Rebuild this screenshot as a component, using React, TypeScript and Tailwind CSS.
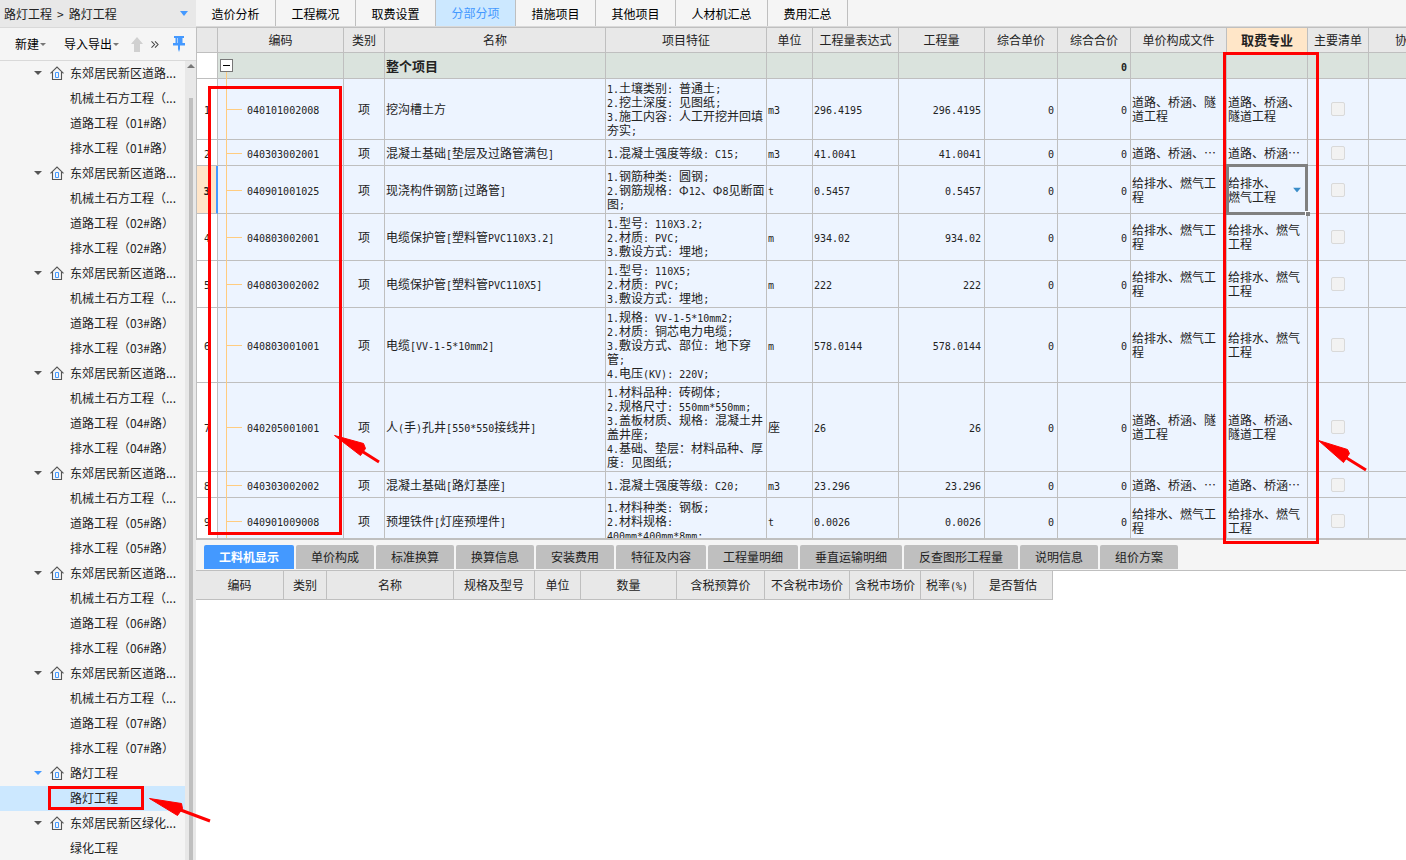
import { useState } from "react";

const mainTabs = [
  "造价分析",
  "工程概况",
  "取费设置",
  "分部分项",
  "措施项目",
  "其他项目",
  "人材机汇总",
  "费用汇总",
];

const detailTabs = [
  { label: "工料机显示", width: "w-[90px]" },
  { label: "单价构成", width: "w-[78px]" },
  { label: "标准换算", width: "w-[78px]" },
  { label: "换算信息", width: "w-[78px]" },
  { label: "安装费用", width: "w-[78px]" },
  { label: "特征及内容", width: "w-[90px]" },
  { label: "工程量明细", width: "w-[90px]" },
  { label: "垂直运输明细", width: "w-[102px]" },
  { label: "反查图形工程量", width: "w-[114px]" },
  { label: "说明信息", width: "w-[78px]" },
  { label: "组价方案", width: "w-[78px]" },
];

const columns = [
  { label: "", width: "w-[21px]" },
  { label: "编码", width: "w-[126px]" },
  { label: "类别", width: "w-[41px]" },
  { label: "名称", width: "w-[221px]" },
  { label: "项目特征", width: "w-[161px]" },
  { label: "单位", width: "w-[46px]" },
  { label: "工程量表达式", width: "w-[86px]" },
  { label: "工程量", width: "w-[86px]" },
  { label: "综合单价", width: "w-[73px]" },
  { label: "综合合价", width: "w-[73px]" },
  { label: "单价构成文件", width: "w-[96px]" },
  { label: "取费专业", width: "w-[81px]" },
  { label: "主要清单", width: "w-[61px]" },
];

const detailColumns = [
  { label: "编码", width: "w-[88px]" },
  { label: "类别", width: "w-[43px]" },
  { label: "名称", width: "w-[127px]" },
  { label: "规格及型号", width: "w-[81px]" },
  { label: "单位", width: "w-[46px]" },
  { label: "数量", width: "w-[96px]" },
  { label: "含税预算价", width: "w-[88px]" },
  { label: "不含税市场价", width: "w-[85px]" },
  { label: "含税市场价", width: "w-[71px]" },
  { label: "税率(%)", width: "w-[53px]" },
  { label: "是否暂估", width: "w-[79px]" },
];

const ROAD = "道路、桥涵、隧\n道工程";
const ROAD_FEE = "道路、桥涵、\n隧道工程";
const WATER = "给排水、燃气工\n程";
const WATER_FEE = "给排水、燃气\n工程";

interface Item {
  code: string;
  name: string;
  feature: string;
  unit: string;
  qty: string;
  file: string;
  fee: string;
  height: string;
}

const items: Item[] = [
  {
    code: "040101002008",
    name: "挖沟槽土方",
    feature: "1.土壤类别: 普通土;\n2.挖土深度: 见图纸;\n3.施工内容: 人工开挖并回填\n夯实;",
    unit: "m3",
    qty: "296.4195",
    file: ROAD,
    fee: ROAD_FEE,
    height: "h-[61px]",
  },
  {
    code: "040303002001",
    name: "混凝土基础[垫层及过路管满包]",
    feature: "1.混凝土强度等级: C15;",
    unit: "m3",
    qty: "41.0041",
    file: "道路、桥涵、…",
    fee: "道路、桥涵…",
    height: "h-[26px]",
  },
  {
    code: "040901001025",
    name: "现浇构件钢筋[过路管]",
    feature: "1.钢筋种类: 圆钢;\n2.钢筋规格: Φ12、Φ8见断面\n图;",
    unit: "t",
    qty: "0.5457",
    file: WATER,
    fee: "给排水、\n燃气工程",
    height: "h-[48px]",
  },
  {
    code: "040803002001",
    name: "电缆保护管[塑料管PVC110X3.2]",
    feature: "1.型号: 110X3.2;\n2.材质: PVC;\n3.敷设方式: 埋地;",
    unit: "m",
    qty: "934.02",
    file: WATER,
    fee: WATER_FEE,
    height: "h-[47px]",
  },
  {
    code: "040803002002",
    name: "电缆保护管[塑料管PVC110X5]",
    feature: "1.型号: 110X5;\n2.材质: PVC;\n3.敷设方式: 埋地;",
    unit: "m",
    qty: "222",
    file: WATER,
    fee: WATER_FEE,
    height: "h-[47px]",
  },
  {
    code: "040803001001",
    name: "电缆[VV-1-5*10mm2]",
    feature:
      "1.规格: VV-1-5*10mm2;\n2.材质: 铜芯电力电缆;\n3.敷设方式、部位: 地下穿\n管;\n4.电压(KV): 220V;",
    unit: "m",
    qty: "578.0144",
    file: WATER,
    fee: WATER_FEE,
    height: "h-[75px]",
  },
  {
    code: "040205001001",
    name: "人(手)孔井[550*550接线井]",
    feature:
      "1.材料品种: 砖砌体;\n2.规格尺寸: 550mm*550mm;\n3.盖板材质、规格: 混凝土井\n盖井座;\n4.基础、垫层：材料品种、厚\n度: 见图纸;",
    unit: "座",
    qty: "26",
    file: ROAD,
    fee: ROAD_FEE,
    height: "h-[89px]",
  },
  {
    code: "040303002002",
    name: "混凝土基础[路灯基座]",
    feature: "1.混凝土强度等级: C20;",
    unit: "m3",
    qty: "23.296",
    file: "道路、桥涵、…",
    fee: "道路、桥涵…",
    height: "h-[26px]",
  },
  {
    code: "040901009008",
    name: "预埋铁件[灯座预埋件]",
    feature: "1.材料种类: 钢板;\n2.材料规格:\n400mm*400mm*8mm;",
    unit: "t",
    qty: "0.0026",
    file: WATER,
    fee: WATER_FEE,
    height: "h-[47px]",
  },
];

interface Node {
  label: string;
  parent?: boolean;
}

const tree: Node[] = [
  ...["01", "02", "03", "04", "05", "06", "07"].flatMap((n) => [
    { label: "东郊居民新区道路...", parent: true },
    { label: "机械土石方工程（..." },
    { label: `道路工程（${n}#路）` },
    { label: `排水工程（${n}#路）` },
  ]),
  { label: "路灯工程", parent: true },
  { label: "路灯工程" },
  { label: "东郊居民新区绿化...", parent: true },
  { label: "绿化工程" },
];

// Latin runs use a half-width monospace so they line up with the Chinese glyphs
function Mixed({ text }: { text: string }) {
  return (
    <>
      {text.split(/([\x20-\x7e]+)/).map((part, i) =>
        i % 2 === 1 ? (
          <span
            key={i}
            className="font-['DejaVu_Sans_Mono',monospace] text-[10px] leading-[10px]"
          >
            {part}
          </span>
        ) : (
          part
        )
      )}
    </>
  );
}

function Caret({ className }: { className: string }) {
  return (
    <svg viewBox="0 0 8 5" className={className} fill="currentColor" preserveAspectRatio="none">
      <path d="M0 0h8L4 5z" />
    </svg>
  );
}

function HomeIcon() {
  return (
    <svg width="14" height="14" viewBox="0 0 14 14" fill="none" className="shrink-0">
      <path d="M0.5 7.3 7 1l6.5 6.3M2.5 6v7.5h9V6" stroke="#555" strokeWidth="1.1" />
      <path d="M5.5 6.5h3v5h-3z" stroke="#4499ff" />
    </svg>
  );
}

function PinIcon() {
  return (
    <svg width="12" height="16" viewBox="0 0 12 16" fill="#4499ff">
      <path d="M1 0h10v2H9.500v5H12v2.500H7V13l-1 3-1-3V9.500H0V7h2.500V2H1z" />
      <path d="M4 2h1v5H4z" fill="#a8d0ff" />
    </svg>
  );
}

function Sidebar() {
  const [selected, setSelected] = useState(29);

  return (
    <aside className="flex w-[196px] shrink-0 flex-col bg-[#f5f5f5]">
      <button className="flex h-[28px] shrink-0 items-center gap-[5px] border-b border-[#d9d9d9] bg-[#e8e8e8] pr-2 pl-1">
        <span>路灯工程</span>
        <span>&gt;</span>
        <span>路灯工程</span>
        <Caret className="ml-auto h-[5px] w-2 text-[#4499ff]" />
      </button>

      <div className="flex h-[33px] shrink-0 items-center border-b border-[#d9d9d9] pl-[15px] text-black">
        <button className="flex items-center">
          新建
          <Caret className="ml-px h-[3px] w-[6px] text-[#777]" />
        </button>
        <button className="ml-[18px] flex items-center">
          导入导出
          <Caret className="ml-px h-[3px] w-[6px] text-[#777]" />
        </button>
        <button aria-label="上移" className="ml-3">
          <svg width="12" height="15" viewBox="0 0 12 15" fill="#d0d0d0">
            <path d="M6 0l6 7H9v8H3V7H0z" />
          </svg>
        </button>
        <button aria-label="更多" className="ml-2">
          <svg width="8" height="7" viewBox="0 0 9 8" fill="none" stroke="#444" strokeWidth="1.2">
            <path d="M0.500 0.500 4 4 0.500 7.500M4.500 0.500 8 4 4.500 7.500" />
          </svg>
        </button>
        <button aria-label="固定" className="ml-[14px]">
          <PinIcon />
        </button>
      </div>

      <div className="flex min-h-0 flex-1">
        <ul className="min-w-0 flex-1 overflow-hidden">
          {tree.map((node, i) => (
            <li key={i}>
              <button
                onClick={() => setSelected(i)}
                className={`flex h-[25px] w-full items-center pb-px whitespace-nowrap ${
                  node.parent ? "pl-[34px]" : "pl-[70px]"
                } ${selected === i ? "bg-[#cce8ff]" : ""}`}
              >
                {node.parent && (
                  <>
                    <Caret
                      className={`mr-2 h-1 w-2 shrink-0 ${
                        i === 28 ? "text-[#4499ff]" : "text-[#555]"
                      }`}
                    />
                    <HomeIcon />
                    <span className="w-[6px] shrink-0" />
                  </>
                )}
                {node.label}
              </button>
            </li>
          ))}
        </ul>
        <div className="flex w-[11px] shrink-0 flex-col items-center bg-[#e8e8e8] pt-[3px]">
          <Caret className="h-1 w-2 rotate-180 text-[#777]" />
          <div className="mt-[30px] w-[4px] flex-1 bg-[#bfbfbf]" />
        </div>
      </div>
    </aside>
  );
}

const cell = "border-r border-b border-[#bfbfbf] whitespace-pre p-0";

function ItemRow({ item, index }: { item: Item; index: number }) {
  const current = index === 2;

  return (
    <tr className={`${item.height} bg-[#edf4ff]`}>
      <td
        className={`border-b border-b-[#bfbfbf] p-0 text-center ${
          current
            ? "border-r-2 border-r-[#4499ff] bg-[#ffe5c8] font-bold"
            : "border-r border-r-[#bfbfbf] bg-white"
        }`}
      >
        <Mixed text={String(index + 1)} />
      </td>
      <td className={`${cell} relative`}>
        <span className="absolute top-0 -bottom-px left-2 w-px bg-[#ffcc80]" />
        <span className="absolute top-1/2 left-2 h-px w-4 bg-[#ffcc80]" />
        <span className="pl-[29px]">
          <Mixed text={item.code} />
        </span>
      </td>
      <td className={`${cell} text-center`}>项</td>
      <td className={`${cell} pl-px`}>
        <Mixed text={item.name} />
      </td>
      <td className={`${cell} pl-px`}>
        <Mixed text={item.feature} />
      </td>
      <td className={`${cell} pl-px`}>
        <Mixed text={item.unit} />
      </td>
      <td className={`${cell} pl-px`}>
        <Mixed text={item.qty} />
      </td>
      <td className={`${cell} pr-[3px] text-right`}>
        <Mixed text={item.qty} />
      </td>
      <td className={`${cell} pr-[3px] text-right`}>
        <Mixed text="0" />
      </td>
      <td className={`${cell} pr-[3px] text-right`}>
        <Mixed text="0" />
      </td>
      <td className={`${cell} pl-px`}>{item.file}</td>
      <td className={`${cell} relative pl-px`}>
        {item.fee}
        {current && (
          <>
            <span className="absolute -inset-x-px -inset-y-0.5 border-3 border-[#808080]" />
            <span className="absolute -right-[3px] -bottom-[3px] z-10 size-[5px] border-t border-l border-white bg-[#808080]" />
            <button aria-label="选择取费专业" className="absolute top-1/2 right-[6px] -translate-y-1/2">
              <Caret className="h-[5px] w-2 text-[#3a8cc8]" />
            </button>
          </>
        )}
      </td>
      <td className={`${cell} text-center`}>
        <input
          type="checkbox"
          aria-label="主要清单"
          className="mx-auto block size-[14px] appearance-none rounded-[2px] border border-[#d9d9d9] bg-[#f2f2f2]"
        />
      </td>
      <td className="border-b border-[#bfbfbf] p-0" />
    </tr>
  );
}

function BillTable() {
  return (
    <table className="w-full table-fixed border-separate border-spacing-0 border-t border-l border-[#bfbfbf] leading-[14px]">
      <thead>
        <tr className="h-[25px] bg-[#e8e8e8]">
          {columns.map((col) => (
            <th
              key={col.label}
              className={`${col.width} border-r border-b border-r-[#bfbfbf] p-0 whitespace-nowrap ${
                col.label === "取费专业"
                  ? "border-b-[#4499ff] bg-[#ffe6c8] text-[13px] font-bold"
                  : "border-b-[#bfbfbf] font-normal"
              }`}
            >
              {col.label}
            </th>
          ))}
          <th className="overflow-hidden border-b border-[#bfbfbf] p-0 pl-[26px] text-left font-normal whitespace-nowrap">
            协
          </th>
        </tr>
      </thead>
      <tbody>
        <tr className="h-[26px] bg-[#dae3dd] text-[13px] font-bold">
          <td className={`${cell} bg-white`} />
          <td className={`${cell} relative`}>
            <span className="absolute top-[19px] -bottom-px left-2 w-px bg-[#ffcc80]" />
            <button
              aria-label="折叠"
              className="absolute top-[6px] left-[2px] flex size-[13px] items-center justify-center border border-[#777] bg-white"
            >
              <span className="h-px w-[7px] bg-black" />
            </button>
          </td>
          <td className={cell} />
          <td className={`${cell} pl-px`}>整个项目</td>
          <td className={cell} />
          <td className={cell} />
          <td className={cell} />
          <td className={cell} />
          <td className={cell} />
          <td className={`${cell} pr-[3px] text-right`}>
            <Mixed text="0" />
          </td>
          <td className={cell} />
          <td className={cell} />
          <td className={cell} />
          <td className="border-b border-[#bfbfbf] p-0" />
        </tr>
        {items.map((item, i) => (
          <ItemRow key={item.code} item={item} index={i} />
        ))}
      </tbody>
    </table>
  );
}

function DetailPane() {
  const [active, setActive] = useState("工料机显示");

  return (
    <section className="flex-1 bg-white">
      <div className="flex h-[31px] gap-[2px] border-b border-[#bfbfbf] bg-[#f5f5f5] pt-[5px] pl-2">
        {detailTabs.map((tab) => (
          <button
            key={tab.label}
            onClick={() => setActive(tab.label)}
            className={`h-[24px] shrink-0 rounded-t-[2px] ${tab.width} ${
              active === tab.label ? "bg-[#4499ff] font-bold text-white" : "bg-[#bfbfbf]"
            }`}
          >
            {tab.label}
          </button>
        ))}
      </div>
      <table className="table-fixed border-separate border-spacing-0">
        <thead>
          <tr className="h-[29px] bg-[#e8e8e8]">
            {detailColumns.map((col) => (
              <th
                key={col.label}
                className={`${col.width} border-r border-b border-[#bfbfbf] p-0 font-normal whitespace-nowrap`}
              >
                <Mixed text={col.label} />
              </th>
            ))}
          </tr>
        </thead>
      </table>
    </section>
  );
}

// red boxes and arrows drawn over the window
function Marks() {
  return (
    <svg className="pointer-events-none absolute inset-0 z-20 h-full w-full" fill="none" stroke="#ff0000">
      <g strokeWidth="3">
        <rect x="209.500" y="87.500" width="131" height="446" />
        <rect x="1224.500" y="53.500" width="93" height="489" />
        <rect x="49.500" y="787.500" width="93" height="21" />
        <path d="M360 450l19 12M1345 457l21 13M178 809l32 12" />
      </g>
      <g fill="#ff0000" strokeLinejoin="round">
        <path d="M334.500 435.500l29 8 2 5-5 7z" />
        <path d="M1318.500 440.500l29 9 2 4-6 9z" />
        <path d="M149.500 798.500l32 5 1 5-5 7z" />
      </g>
    </svg>
  );
}

export default function App() {
  const [tab, setTab] = useState("分部分项");

  return (
    <div className="relative flex h-screen overflow-hidden bg-white font-['Noto_Sans_CJK_SC',sans-serif] text-[12px] leading-[18px] text-[#222]">
      <Sidebar />
      <main className="flex min-w-0 flex-1 flex-col">
        <nav className="flex h-[27px] shrink-0 border-b border-[#d9d9d9] bg-[#f5f5f5]">
          {mainTabs.map((label) => (
            <button
              key={label}
              onClick={() => setTab(label)}
              className={`shrink-0 border-r border-[#bfbfbf] ${
                label === "人材机汇总" ? "w-[92px]" : "w-[80px]"
              } ${tab === label ? "bg-[#cce8ff] text-[#4499ff]" : "pt-px text-black"}`}
            >
              {label}
            </button>
          ))}
        </nav>
        <div className="h-[513px] shrink-0 overflow-hidden border-b-2 border-[#bfbfbf]">
          <BillTable />
        </div>
        <DetailPane />
      </main>
      <Marks />
    </div>
  );
}
